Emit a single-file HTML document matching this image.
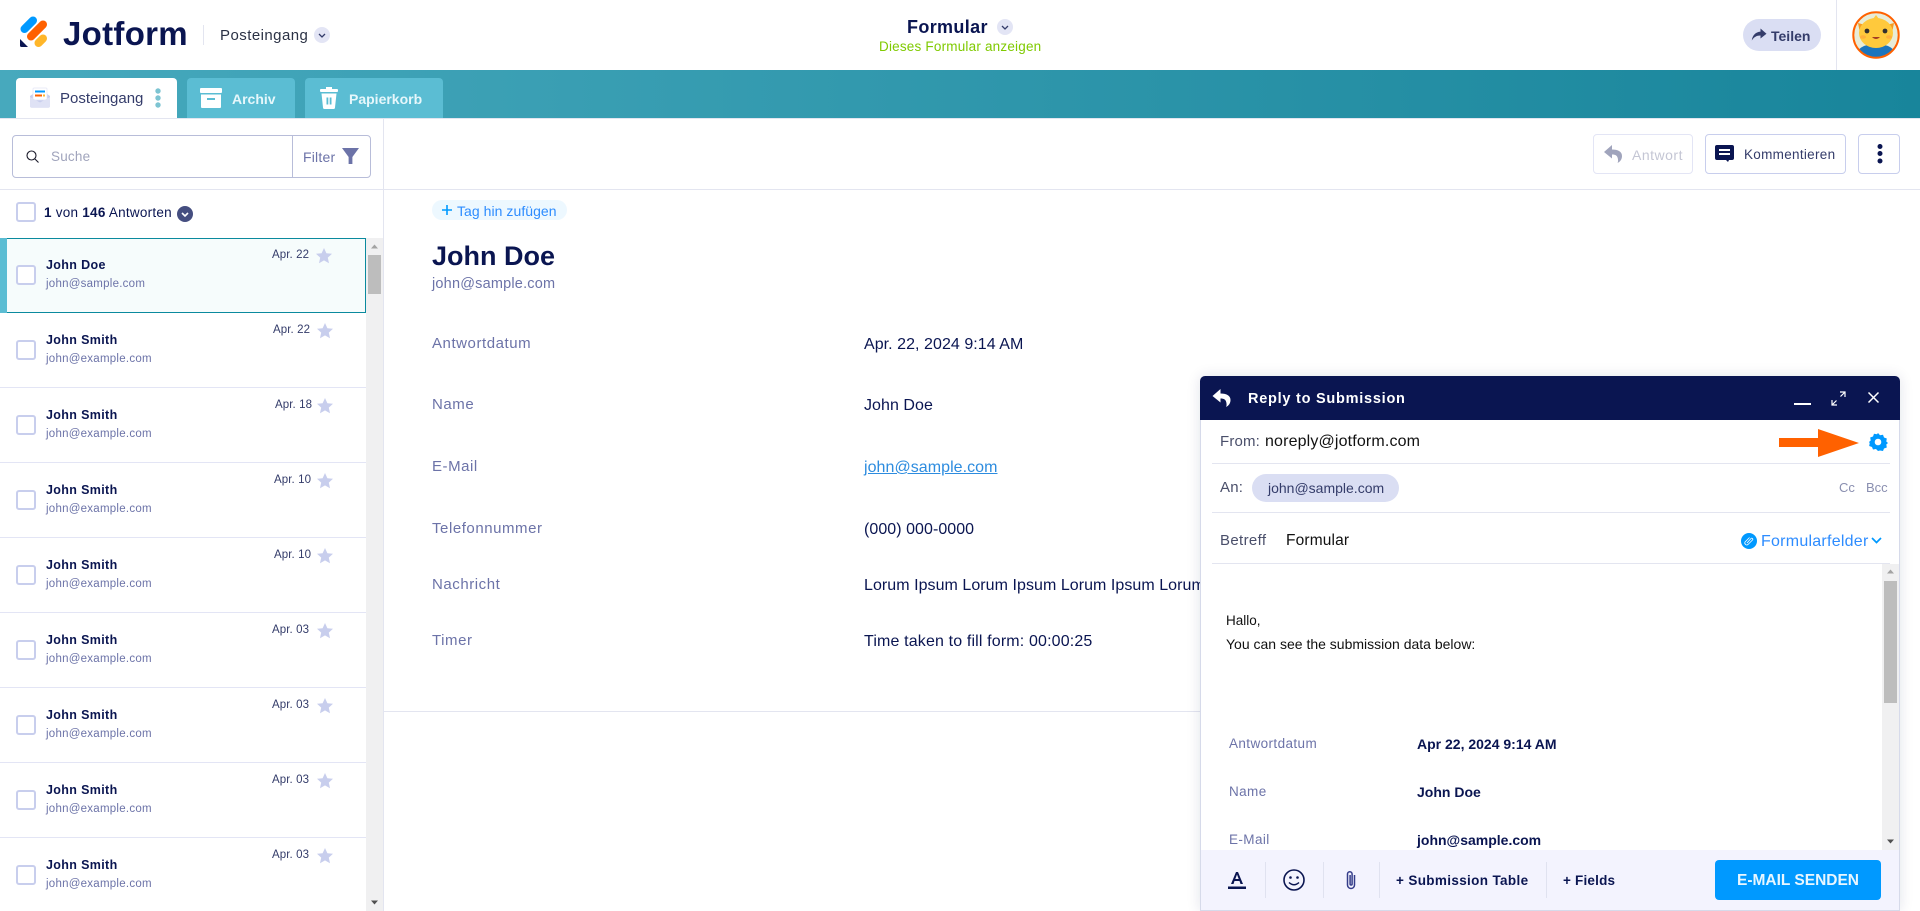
<!DOCTYPE html>
<html lang="de"><head><meta charset="utf-8"><title>Jotform Inbox</title>
<style>
*{box-sizing:border-box}
html,body{margin:0;padding:0;width:1920px;height:911px;overflow:hidden;background:#fff;font-family:"Liberation Sans",sans-serif;color:#0a1551}
.t{position:absolute;white-space:nowrap;line-height:20px;height:20px;transform:translateY(1px)}
.b{position:absolute}
.svg{position:absolute;overflow:visible}
.cb{position:absolute;width:20px;height:20px;border:2px solid #c8ceed;border-radius:3px;background:#fff}
.rowline{position:absolute;left:0;width:366px;height:1px;background:#e3e5f5}
.nm{font-size:12.5px;font-weight:bold;color:#0a1551;letter-spacing:.35px}
.em{font-size:11.5px;color:#6c73a8;letter-spacing:.25px}
.dt{font-size:11.5px;color:#343c6a;letter-spacing:.1px}
.lb{font-size:15px;color:#6c73a8;letter-spacing:.55px}
.vl{font-size:16px;color:#0a1551;letter-spacing:.05px}
.hl{position:absolute;left:1212px;width:678px;height:1px;background:#e3e5f0}
</style></head><body>

<!-- top header -->
<svg class="svg" style="left:0;top:0" width="60" height="60" viewBox="0 0 60 60">
<line x1="24.500" y1="29" x2="33" y2="20.500" stroke="#0099ff" stroke-width="8" stroke-linecap="round"/>
<line x1="31" y1="36.500" x2="43" y2="24.500" stroke="#ff6100" stroke-width="8" stroke-linecap="round"/>
<line x1="38.500" y1="43" x2="43" y2="38.500" stroke="#ffb629" stroke-width="8" stroke-linecap="round"/>
<path d="M20 39 L20 45.500 Q20 47 21.500 47 L28 47 Z" fill="#0a1551"/>
</svg>
<div class="t" style="left:63px;top:17px;font-size:33px;height:32px;line-height:32px;font-weight:bold;color:#0a1551;letter-spacing:.3px">Jotform</div>
<div class="b" style="left:203px;top:25px;width:1px;height:20px;background:#e3e5f0"></div>
<div class="t" style="left:220px;top:25px;font-size:15px;color:#2b3245;letter-spacing:.45px">Posteingang</div>
<div class="b" style="left:314px;top:27px;width:16px;height:16px;border-radius:50%;background:#e3e5f5"></div>
<svg class="svg" style="left:314px;top:27px" width="16" height="16"><path d="M5 7l3 3 3-3" fill="none" stroke="#343c6a" stroke-width="1.300"/></svg>

<div class="t" style="left:907px;top:16px;font-size:18px;font-weight:bold;letter-spacing:.35px;color:#0a1551">Formular</div>
<div class="b" style="left:997px;top:19px;width:16px;height:16px;border-radius:50%;background:#e3e5f5"></div>
<svg class="svg" style="left:997px;top:19px" width="16" height="16"><path d="M5 7l3 3 3-3" fill="none" stroke="#343c6a" stroke-width="1.300"/></svg>
<div class="t" style="left:879px;top:36px;font-size:13.500px;color:#7fca00;letter-spacing:.2px">Dieses Formular anzeigen</div>

<div class="b" style="left:1743px;top:19px;width:78px;height:32px;border-radius:16px;background:#dadef3"></div>
<svg class="svg" style="left:1751px;top:27px" width="16" height="16" viewBox="0 0 16 16"><path d="M9.500 1.500L15.500 6.800 9.500 11.500V8.500C5.500 8.500 3 10 .8 13.500 1.300 8.500 4.500 5 9.500 4.600Z" fill="#343c6a"/></svg>
<div class="t" style="left:1771px;top:25px;font-size:14px;font-weight:bold;color:#343c6a">Teilen</div>
<div class="b" style="left:1836px;top:0;width:1px;height:70px;background:#e3e5f0"></div>
<svg class="svg" style="left:1852px;top:11px" width="48" height="48" viewBox="0 0 48 48">
<defs><clipPath id="c"><circle cx="24" cy="24" r="22.500"/></clipPath></defs>
<circle cx="24" cy="24" r="23" fill="#e8ecd8"/>
<g clip-path="url(#c)">
<path d="M3 47 Q5 33 24 33 Q43 33 45 47Z" fill="#1d75bd"/>
<path d="M6 12 L17 15 L9 27Z M42 12 L31 15 L39 27Z" fill="#f59a23"/>
<ellipse cx="24" cy="22" rx="17" ry="15" fill="#ffc93c"/>
<path d="M21 8 L24 4 L27 8Z" fill="#ffc93c"/>
<circle cx="15" cy="20" r="2.400" fill="#33302e"/><circle cx="33" cy="20" r="2.400" fill="#33302e"/>
<ellipse cx="11" cy="26" rx="3" ry="1.800" fill="#ffb03c"/><ellipse cx="37" cy="26" rx="3" ry="1.800" fill="#ffb03c"/>
<path d="M20 26 Q24 30 28 26Z" fill="#a33b22"/>
</g>
<circle cx="24" cy="24" r="22.700" fill="none" stroke="#ff6100" stroke-width="2"/>
</svg>

<!-- teal bar -->
<div class="b" style="left:0;top:70px;width:1920px;height:48px;background:linear-gradient(90deg,#47a9bd,#18859b)"></div>
<div class="b" style="left:16px;top:78px;width:161px;height:40px;background:#fff;border-radius:4px 4px 0 0"></div>
<svg class="svg" style="left:30px;top:88px" width="20" height="20" viewBox="0 0 20 20">
<path d="M0 8L10 1l10 7v10a1.500 1.500 0 0 1-1.500 1.500h-17A1.500 1.500 0 0 1 0 18Z" fill="#c8ceed"/>
<rect x="3" y="0" width="14" height="12" rx="1" fill="#fff" stroke="#e3e5f5" stroke-width=".7"/>
<rect x="5" y="2.500" width="10" height="2" fill="#0099ff"/><rect x="5" y="6.500" width="7" height="2" fill="#ff6100"/><rect x="13" y="6.500" width="2" height="2" fill="#ffb629"/>
<path d="M0 9l10 5.500L20 9v10H0Z" fill="#dfe2f5"/>
</svg>
<div class="t" style="left:60px;top:88px;font-size:15px;color:#343c6a">Posteingang</div>
<svg class="svg" style="left:154px;top:87px" width="8" height="22"><circle cx="4" cy="4" r="2.700" fill="#7dc4d2"/><circle cx="4" cy="11" r="2.700" fill="#7dc4d2"/><circle cx="4" cy="18" r="2.700" fill="#7dc4d2"/></svg>

<div class="b" style="left:187px;top:78px;width:108px;height:40px;background:#5bbdd3;border-radius:4px 4px 0 0"></div>
<svg class="svg" style="left:200px;top:88px" width="22" height="20" viewBox="0 0 22 20"><rect x="0" y="0" width="22" height="5" rx="1" fill="#fff"/><path d="M1 6.500h20V19a1 1 0 0 1-1 1H2a1 1 0 0 1-1-1Z" fill="#fff"/><rect x="7" y="10" width="8" height="2" fill="#5bbdd3"/></svg>
<div class="t" style="left:232px;top:88px;font-size:14px;font-weight:bold;color:#e6f7fb">Archiv</div>

<div class="b" style="left:305px;top:78px;width:138px;height:40px;background:#5bbdd3;border-radius:4px 4px 0 0"></div>
<svg class="svg" style="left:320px;top:87px" width="18" height="22" viewBox="0 0 18 22"><rect x="0" y="2" width="18" height="3" rx="1" fill="#fff"/><rect x="6" y="0" width="6" height="3" fill="#fff"/><path d="M1.500 6.500h15L15 20.500a1.500 1.500 0 0 1-1.500 1.500h-9A1.500 1.500 0 0 1 3 20.500Z" fill="#fff"/><rect x="6.500" y="10.500" width="1.800" height="7" fill="#5bbdd3"/><rect x="9.700" y="10.500" width="1.800" height="7" fill="#5bbdd3"/></svg>
<div class="t" style="left:349px;top:88px;font-size:14px;font-weight:bold;color:#e6f7fb">Papierkorb</div>

<!-- sidebar -->
<div class="b" style="left:383px;top:118px;width:1px;height:793px;background:#e3e5f0"></div>
<div class="b" style="left:0;top:118px;width:1920px;height:1px;background:#e3e5f0"></div>
<div class="b" style="left:12px;top:135px;width:359px;height:43px;border:1px solid #b8bdd9;border-radius:4px"></div>
<div class="b" style="left:292px;top:135px;width:1px;height:43px;background:#b8bdd9"></div>
<svg class="svg" style="left:26px;top:150px" width="13" height="13" viewBox="0 0 13 13"><circle cx="5.500" cy="5.500" r="4.500" fill="none" stroke="#1a1a2a" stroke-width="1.100"/><path d="M9 9l3.500 3.500" stroke="#1a1a2a" stroke-width="1.100"/></svg>
<div class="t" style="left:51px;top:146px;font-size:13.500px;color:#a0a4bc;letter-spacing:.2px">Suche</div>
<div class="t" style="left:303px;top:146px;font-size:14px;color:#6c73a8;letter-spacing:.2px">Filter</div>
<svg class="svg" style="left:342px;top:148px" width="17" height="17" viewBox="0 0 18 18"><path d="M0 0h18L11 9.500V17l-4 0V9.500Z" fill="#6c73a8"/></svg>
<div class="b" style="left:0;top:189px;width:1920px;height:1px;background:#e3e5f0"></div>

<div class="cb" style="left:16px;top:202px"></div>
<div class="t" style="left:44px;top:202px;font-size:13.500px;color:#0a1551;letter-spacing:.25px"><b>1</b> von <b>146</b> Antworten</div>
<div class="b" style="left:177px;top:206px;width:16px;height:16px;border-radius:50%;background:#454e80"></div>
<svg class="svg" style="left:177px;top:206px" width="16" height="16"><path d="M5 7l3 3 3-3" fill="none" stroke="#fff" stroke-width="1.600"/></svg>

<!-- selected row -->
<div class="b" style="left:0;top:238px;width:366px;height:75px;background:#f6fcfc;border:1px solid #0a8a9e"></div>
<div class="b" style="left:0;top:238px;width:7px;height:75px;background:#5bbdd3"></div>

<div class="cb" style="left:16px;top:265px"></div>
<div class="t nm" style="left:46px;top:254px">John Doe</div><div class="t em" style="left:46px;top:273px">john@sample.com</div>
<div class="t dt" style="left:272px;top:244px">Apr. 22</div>
<svg class="svg" style="left:316px;top:248px" width="16" height="16" viewBox="0 0 16 16"><path d="M8 0l2.400 5.200 5.600.6-4.200 3.800 1.200 5.600L8 12.400 3 15.200l1.200-5.600L0 5.800l5.600-.6Z" fill="#c8ceed"/></svg>

<div class="cb" style="left:16px;top:340px"></div>
<div class="t nm" style="left:46px;top:329px">John Smith</div><div class="t em" style="left:46px;top:348px">john@example.com</div>
<div class="t dt" style="left:273px;top:319px">Apr. 22</div>
<svg class="svg" style="left:317px;top:323px" width="16" height="16" viewBox="0 0 16 16"><path d="M8 0l2.400 5.200 5.600.6-4.200 3.800 1.200 5.600L8 12.400 3 15.200l1.200-5.600L0 5.800l5.600-.6Z" fill="#c8ceed"/></svg>
<div class="rowline" style="top:387px"></div>

<div class="cb" style="left:16px;top:415px"></div>
<div class="t nm" style="left:46px;top:404px">John Smith</div><div class="t em" style="left:46px;top:423px">john@example.com</div>
<div class="t dt" style="left:275px;top:394px">Apr. 18</div>
<svg class="svg" style="left:317px;top:398px" width="16" height="16" viewBox="0 0 16 16"><path d="M8 0l2.400 5.200 5.600.6-4.200 3.800 1.200 5.600L8 12.400 3 15.200l1.200-5.600L0 5.800l5.600-.6Z" fill="#c8ceed"/></svg>
<div class="rowline" style="top:462px"></div>

<div class="cb" style="left:16px;top:490px"></div>
<div class="t nm" style="left:46px;top:479px">John Smith</div><div class="t em" style="left:46px;top:498px">john@example.com</div>
<div class="t dt" style="left:274px;top:469px">Apr. 10</div>
<svg class="svg" style="left:317px;top:473px" width="16" height="16" viewBox="0 0 16 16"><path d="M8 0l2.400 5.200 5.600.6-4.200 3.800 1.200 5.600L8 12.400 3 15.200l1.200-5.600L0 5.800l5.600-.6Z" fill="#c8ceed"/></svg>
<div class="rowline" style="top:537px"></div>

<div class="cb" style="left:16px;top:565px"></div>
<div class="t nm" style="left:46px;top:554px">John Smith</div><div class="t em" style="left:46px;top:573px">john@example.com</div>
<div class="t dt" style="left:274px;top:544px">Apr. 10</div>
<svg class="svg" style="left:317px;top:548px" width="16" height="16" viewBox="0 0 16 16"><path d="M8 0l2.400 5.200 5.600.6-4.200 3.800 1.200 5.600L8 12.400 3 15.200l1.200-5.600L0 5.800l5.600-.6Z" fill="#c8ceed"/></svg>
<div class="rowline" style="top:612px"></div>

<div class="cb" style="left:16px;top:640px"></div>
<div class="t nm" style="left:46px;top:629px">John Smith</div><div class="t em" style="left:46px;top:648px">john@example.com</div>
<div class="t dt" style="left:272px;top:619px">Apr. 03</div>
<svg class="svg" style="left:317px;top:623px" width="16" height="16" viewBox="0 0 16 16"><path d="M8 0l2.400 5.200 5.600.6-4.200 3.800 1.200 5.600L8 12.400 3 15.200l1.200-5.600L0 5.800l5.600-.6Z" fill="#c8ceed"/></svg>
<div class="rowline" style="top:687px"></div>

<div class="cb" style="left:16px;top:715px"></div>
<div class="t nm" style="left:46px;top:704px">John Smith</div><div class="t em" style="left:46px;top:723px">john@example.com</div>
<div class="t dt" style="left:272px;top:694px">Apr. 03</div>
<svg class="svg" style="left:317px;top:698px" width="16" height="16" viewBox="0 0 16 16"><path d="M8 0l2.400 5.200 5.600.6-4.200 3.800 1.200 5.600L8 12.400 3 15.200l1.200-5.600L0 5.800l5.600-.6Z" fill="#c8ceed"/></svg>
<div class="rowline" style="top:762px"></div>

<div class="cb" style="left:16px;top:790px"></div>
<div class="t nm" style="left:46px;top:779px">John Smith</div><div class="t em" style="left:46px;top:798px">john@example.com</div>
<div class="t dt" style="left:272px;top:769px">Apr. 03</div>
<svg class="svg" style="left:317px;top:773px" width="16" height="16" viewBox="0 0 16 16"><path d="M8 0l2.400 5.200 5.600.6-4.200 3.800 1.200 5.600L8 12.400 3 15.200l1.200-5.600L0 5.800l5.600-.6Z" fill="#c8ceed"/></svg>
<div class="rowline" style="top:837px"></div>

<div class="cb" style="left:16px;top:865px"></div>
<div class="t nm" style="left:46px;top:854px">John Smith</div><div class="t em" style="left:46px;top:873px">john@example.com</div>
<div class="t dt" style="left:272px;top:844px">Apr. 03</div>
<svg class="svg" style="left:317px;top:848px" width="16" height="16" viewBox="0 0 16 16"><path d="M8 0l2.400 5.200 5.600.6-4.200 3.800 1.200 5.600L8 12.400 3 15.200l1.200-5.600L0 5.800l5.600-.6Z" fill="#c8ceed"/></svg>

<!-- sidebar scrollbar -->
<div class="b" style="left:366px;top:238px;width:17px;height:673px;background:#f0f0f1"></div>
<div class="b" style="left:368px;top:255px;width:13px;height:39px;background:#bdbdbd"></div>
<svg class="svg" style="left:371px;top:244px" width="7" height="5"><path d="M0 4.500L3.500 .5 7 4.500Z" fill="#a3a3a3"/></svg>
<svg class="svg" style="left:371px;top:900px" width="7" height="5"><path d="M0 .5L3.500 4.500 7 .5Z" fill="#505050"/></svg>

<!-- toolbar -->
<div class="b" style="left:1593px;top:134px;width:100px;height:40px;border:1px solid #e3e5f5;border-radius:4px"></div>
<svg class="svg" style="left:1604px;top:145px" width="18" height="18" viewBox="0 0 18 18"><path d="M8 0L0 7l8 6.500V9.500c3.500 0 5.500 1 6 5 .2 1.500 0 2.800-.5 3.500 3-1.500 4.500-4 4.500-7 0-4.500-4-6.500-10-6.500Z" fill="#a0a4bc"/></svg>
<div class="t" style="left:1632px;top:144px;font-size:14px;color:#c4c6d4;letter-spacing:.5px">Antwort</div>
<div class="b" style="left:1705px;top:134px;width:141px;height:40px;border:1px solid #c8ceed;border-radius:4px"></div>
<svg class="svg" style="left:1715px;top:145px" width="19" height="18" viewBox="0 0 19 18"><path d="M2 0h15a2 2 0 0 1 2 2v11a2 2 0 0 1-2 2h-3l-1 2-2-2H2a2 2 0 0 1-2-2V2a2 2 0 0 1 2-2Z" fill="#0a1551"/><rect x="4" y="4" width="11" height="2" fill="#fff"/><rect x="4" y="8" width="11" height="2" fill="#fff"/></svg>
<div class="t" style="left:1744px;top:144px;font-size:13.500px;color:#343c6a;letter-spacing:.3px">Kommentieren</div>
<div class="b" style="left:1858px;top:134px;width:42px;height:40px;border:1px solid #c8ceed;border-radius:4px"></div>
<svg class="svg" style="left:1875px;top:144px" width="10" height="20"><circle cx="5" cy="2.500" r="2.500" fill="#0a1551"/><circle cx="5" cy="9.500" r="2.500" fill="#0a1551"/><circle cx="5" cy="17" r="2.500" fill="#0a1551"/></svg>

<!-- detail -->
<div class="b" style="left:432px;top:200px;width:135px;height:20px;border-radius:10px;background:#edf8ff"></div>
<svg class="svg" style="left:442px;top:205px" width="10" height="10"><path d="M5 0v10M0 5h10" stroke="#0099ff" stroke-width="1.600"/></svg>
<div class="t" style="left:457px;top:200px;font-size:14px;color:#2d8cff;letter-spacing:.05px">Tag hin zufügen</div>
<div class="t" style="left:432px;top:240px;font-size:27px;height:30px;line-height:30px;font-weight:bold;color:#0a1551">John Doe</div>
<div class="t" style="left:432px;top:273px;font-size:14.500px;color:#6c73a8;letter-spacing:.2px">john@sample.com</div>

<div class="t lb" style="left:432px;top:333px">Antwortdatum</div>
<div class="t vl" style="left:864px;top:334px">Apr. 22, 2024 9:14 AM</div>
<div class="t lb" style="left:432px;top:394px">Name</div>
<div class="t vl" style="left:864px;top:395px">John Doe</div>
<div class="t lb" style="left:432px;top:456px">E-Mail</div>
<div class="t vl" style="left:864px;top:457px;color:#2d8cdf;text-decoration:underline">john@sample.com</div>
<div class="t lb" style="left:432px;top:518px">Telefonnummer</div>
<div class="t vl" style="left:864px;top:519px">(000) 000-0000</div>
<div class="t lb" style="left:432px;top:574px">Nachricht</div>
<div class="t vl" style="left:864px;top:575px;width:336px;overflow:hidden">Lorum Ipsum Lorum Ipsum Lorum Ipsum Lorum Ipsum Lorum Ipsum</div>
<div class="t lb" style="left:432px;top:630px">Timer</div>
<div class="t vl" style="left:864px;top:631px;letter-spacing:.15px">Time taken to fill form: 00:00:25</div>
<div class="b" style="left:384px;top:711px;width:816px;height:1px;background:#e3e5f0"></div>

<!-- modal -->
<div class="b" style="left:1200px;top:376px;width:700px;height:535px;background:#fff;border:1px solid #d6daea;border-top:0;border-radius:5px 5px 0 0;box-shadow:0 0 14px rgba(10,21,81,.12)"></div>
<div class="b" style="left:1200px;top:376px;width:700px;height:44px;background:#0a1551;border-radius:5px 5px 0 0"></div>
<svg class="svg" style="left:1212px;top:389px" width="19" height="18" viewBox="0 0 18 18"><path d="M8 0L0 7l8 6.500V9.500c3.500 0 5.500 1 6 5 .2 1.500 0 2.800-.5 3.500 3-1.500 4.500-4 4.500-7 0-4.500-4-6.500-10-6.500Z" fill="#fff"/></svg>
<div class="t" style="left:1248px;top:388px;font-size:14.500px;font-weight:bold;color:#fff;letter-spacing:.75px">Reply to Submission</div>
<div class="b" style="left:1794px;top:403px;width:17px;height:2px;background:#fff"></div>
<svg class="svg" style="left:1831px;top:391px" width="15" height="15" viewBox="0 0 15 15"><path d="M9 1h5v5M14 1L9.500 5.500M6 14H1V9M1 14l4.500-4.500" fill="none" stroke="#fff" stroke-width="1.200"/></svg>
<svg class="svg" style="left:1868px;top:392px" width="11" height="11"><path d="M.5 .5l10 10M10.500 .5l-10 10" stroke="#fff" stroke-width="1.500"/></svg>

<div class="t" style="left:1220px;top:431px;font-size:15px;color:#4a4f6a;letter-spacing:.15px">From:</div>
<div class="t" style="left:1265px;top:431px;font-size:16px;color:#111;letter-spacing:.15px">noreply@jotform.com</div>
<svg class="svg" style="left:1779px;top:429px" width="80" height="28" viewBox="0 0 80 28"><path d="M0 9h39V0l41 14-41 14V18H0Z" fill="#ff6100"/></svg>
<svg class="svg" style="left:1869px;top:433px" width="18" height="18" viewBox="0 0 18 18"><path d="M9 0l2 2.200 3-.5 1 2.800 2.800 1-.5 3 1.700 1.500-1.700 1.500.5 3-2.800 1-1 2.500-3-.5L9 18l-2-2-3 .5-1-2.500-2.800-1 .5-3L0 9l1.700-1.500-.5-3 2.800-1 1-2.800 3 .5Z" fill="#0099ff"/><circle cx="9" cy="9" r="3.300" fill="#fff"/></svg>
<div class="hl" style="top:463px"></div>

<div class="t" style="left:1220px;top:477px;font-size:15px;color:#4a4f6a;letter-spacing:.2px">An:</div>
<div class="b" style="left:1252px;top:474px;width:147px;height:28px;border-radius:14px;background:#dadef3"></div>
<div class="t" style="left:1268px;top:477px;font-size:14px;color:#343c6a">john@sample.com</div>
<div class="t" style="left:1839px;top:477px;font-size:13px;color:#8a8fb0">Cc</div>
<div class="t" style="left:1866px;top:477px;font-size:13px;color:#8a8fb0">Bcc</div>
<div class="hl" style="top:512px"></div>

<div class="t" style="left:1220px;top:530px;font-size:15px;color:#4a4f6a;letter-spacing:.35px">Betreff</div>
<div class="t" style="left:1286px;top:530px;font-size:15.500px;color:#111;letter-spacing:.15px">Formular</div>
<div class="b" style="left:1741px;top:533px;width:16px;height:16px;border-radius:50%;background:#0099ff"></div>
<svg class="svg" style="left:1744px;top:536px" width="10" height="10" viewBox="0 0 10 10"><path d="M3 7l4-4.500a1 1 0 0 1 1.500 1.500L4 8.500a2 2 0 0 1-3-2.500L5.500 1.500" fill="none" stroke="#fff" stroke-width=".8"/></svg>
<div class="t" style="left:1761px;top:531px;font-size:16px;color:#2d8cff;letter-spacing:.25px">Formularfelder</div>
<svg class="svg" style="left:1871px;top:537px" width="11" height="7"><path d="M1 1l4.500 4.500L10 1" fill="none" stroke="#0099ff" stroke-width="1.700"/></svg>
<div class="hl" style="top:563px"></div>

<div class="b" style="left:1882px;top:564px;width:17px;height:286px;background:#f0f0f1"></div>
<div class="b" style="left:1884px;top:581px;width:13px;height:122px;background:#bdbdbd"></div>
<svg class="svg" style="left:1887px;top:569px" width="7" height="5"><path d="M0 4.500L3.500 .5 7 4.500Z" fill="#a3a3a3"/></svg>
<svg class="svg" style="left:1887px;top:839px" width="7" height="5"><path d="M0 .5L3.500 4.500 7 .5Z" fill="#505050"/></svg>

<div class="t" style="left:1226px;top:610px;font-size:13.500px;color:#111">Hallo,</div>
<div class="t" style="left:1226px;top:633px;font-size:14px;color:#111">You can see the submission data below:</div>
<div class="t" style="left:1229px;top:733px;font-size:13.500px;color:#6c73a8;letter-spacing:.4px">Antwortdatum</div>
<div class="t" style="left:1417px;top:733px;font-size:14px;font-weight:bold;color:#0a1551">Apr 22, 2024 9:14 AM</div>
<div class="t" style="left:1229px;top:781px;font-size:13.500px;color:#6c73a8;letter-spacing:.4px">Name</div>
<div class="t" style="left:1417px;top:781px;font-size:14px;font-weight:bold;color:#0a1551">John Doe</div>
<div class="t" style="left:1229px;top:829px;font-size:13.500px;color:#6c73a8;letter-spacing:.4px">E-Mail</div>
<div class="t" style="left:1417px;top:829px;font-size:14px;font-weight:bold;color:#0a1551">john@sample.com</div>

<!-- modal footer -->
<div class="b" style="left:1201px;top:850px;width:698px;height:60px;background:#f3f3fe"></div>
<div class="b" style="left:1265px;top:862px;width:1px;height:36px;background:#e0e2f0"></div>
<div class="b" style="left:1323px;top:862px;width:1px;height:36px;background:#e0e2f0"></div>
<div class="b" style="left:1379px;top:862px;width:1px;height:36px;background:#e0e2f0"></div>
<div class="b" style="left:1546px;top:862px;width:1px;height:36px;background:#e0e2f0"></div>
<svg class="svg" style="left:1228px;top:871px" width="18" height="19" viewBox="0 0 18 19"><path d="M3 13L8 1h2l5 12h-2.500l-1-3h-5l-1 3ZM7.300 8h3.400L9 3.500Z" fill="#0a1551"/><rect x="0" y="15.500" width="18" height="2.500" fill="#0a1551"/></svg>
<svg class="svg" style="left:1283px;top:869px" width="22" height="22" viewBox="0 0 22 22"><circle cx="11" cy="11" r="10" fill="none" stroke="#0a1551" stroke-width="1.600"/><circle cx="7.500" cy="8.500" r="1.300" fill="#0a1551"/><circle cx="14.500" cy="8.500" r="1.300" fill="#0a1551"/><path d="M6 13.500q5 4.500 10 0" fill="none" stroke="#0a1551" stroke-width="1.500"/></svg>
<svg class="svg" style="left:1344px;top:870px" width="14" height="20" viewBox="0 0 14 20"><path d="M10.500 5v10a3.500 3.500 0 0 1-7 0V4a2.300 2.300 0 0 1 4.600 0v10a1 1 0 0 1-2 0V5" fill="none" stroke="#343c8a" stroke-width="1.500"/></svg>
<div class="t" style="left:1396px;top:870px;font-size:13.500px;font-weight:bold;color:#0a1551;letter-spacing:.35px">+ Submission Table</div>
<div class="t" style="left:1563px;top:870px;font-size:13.500px;font-weight:bold;color:#0a1551;letter-spacing:.2px">+ Fields</div>
<div class="b" style="left:1715px;top:860px;width:166px;height:40px;background:#0099ff;border-radius:4px"></div>
<div class="t" style="left:1715px;top:870px;width:166px;text-align:center;font-size:15.500px;font-weight:bold;color:#e8f6ff">E-MAIL SENDEN</div>
</body></html>
